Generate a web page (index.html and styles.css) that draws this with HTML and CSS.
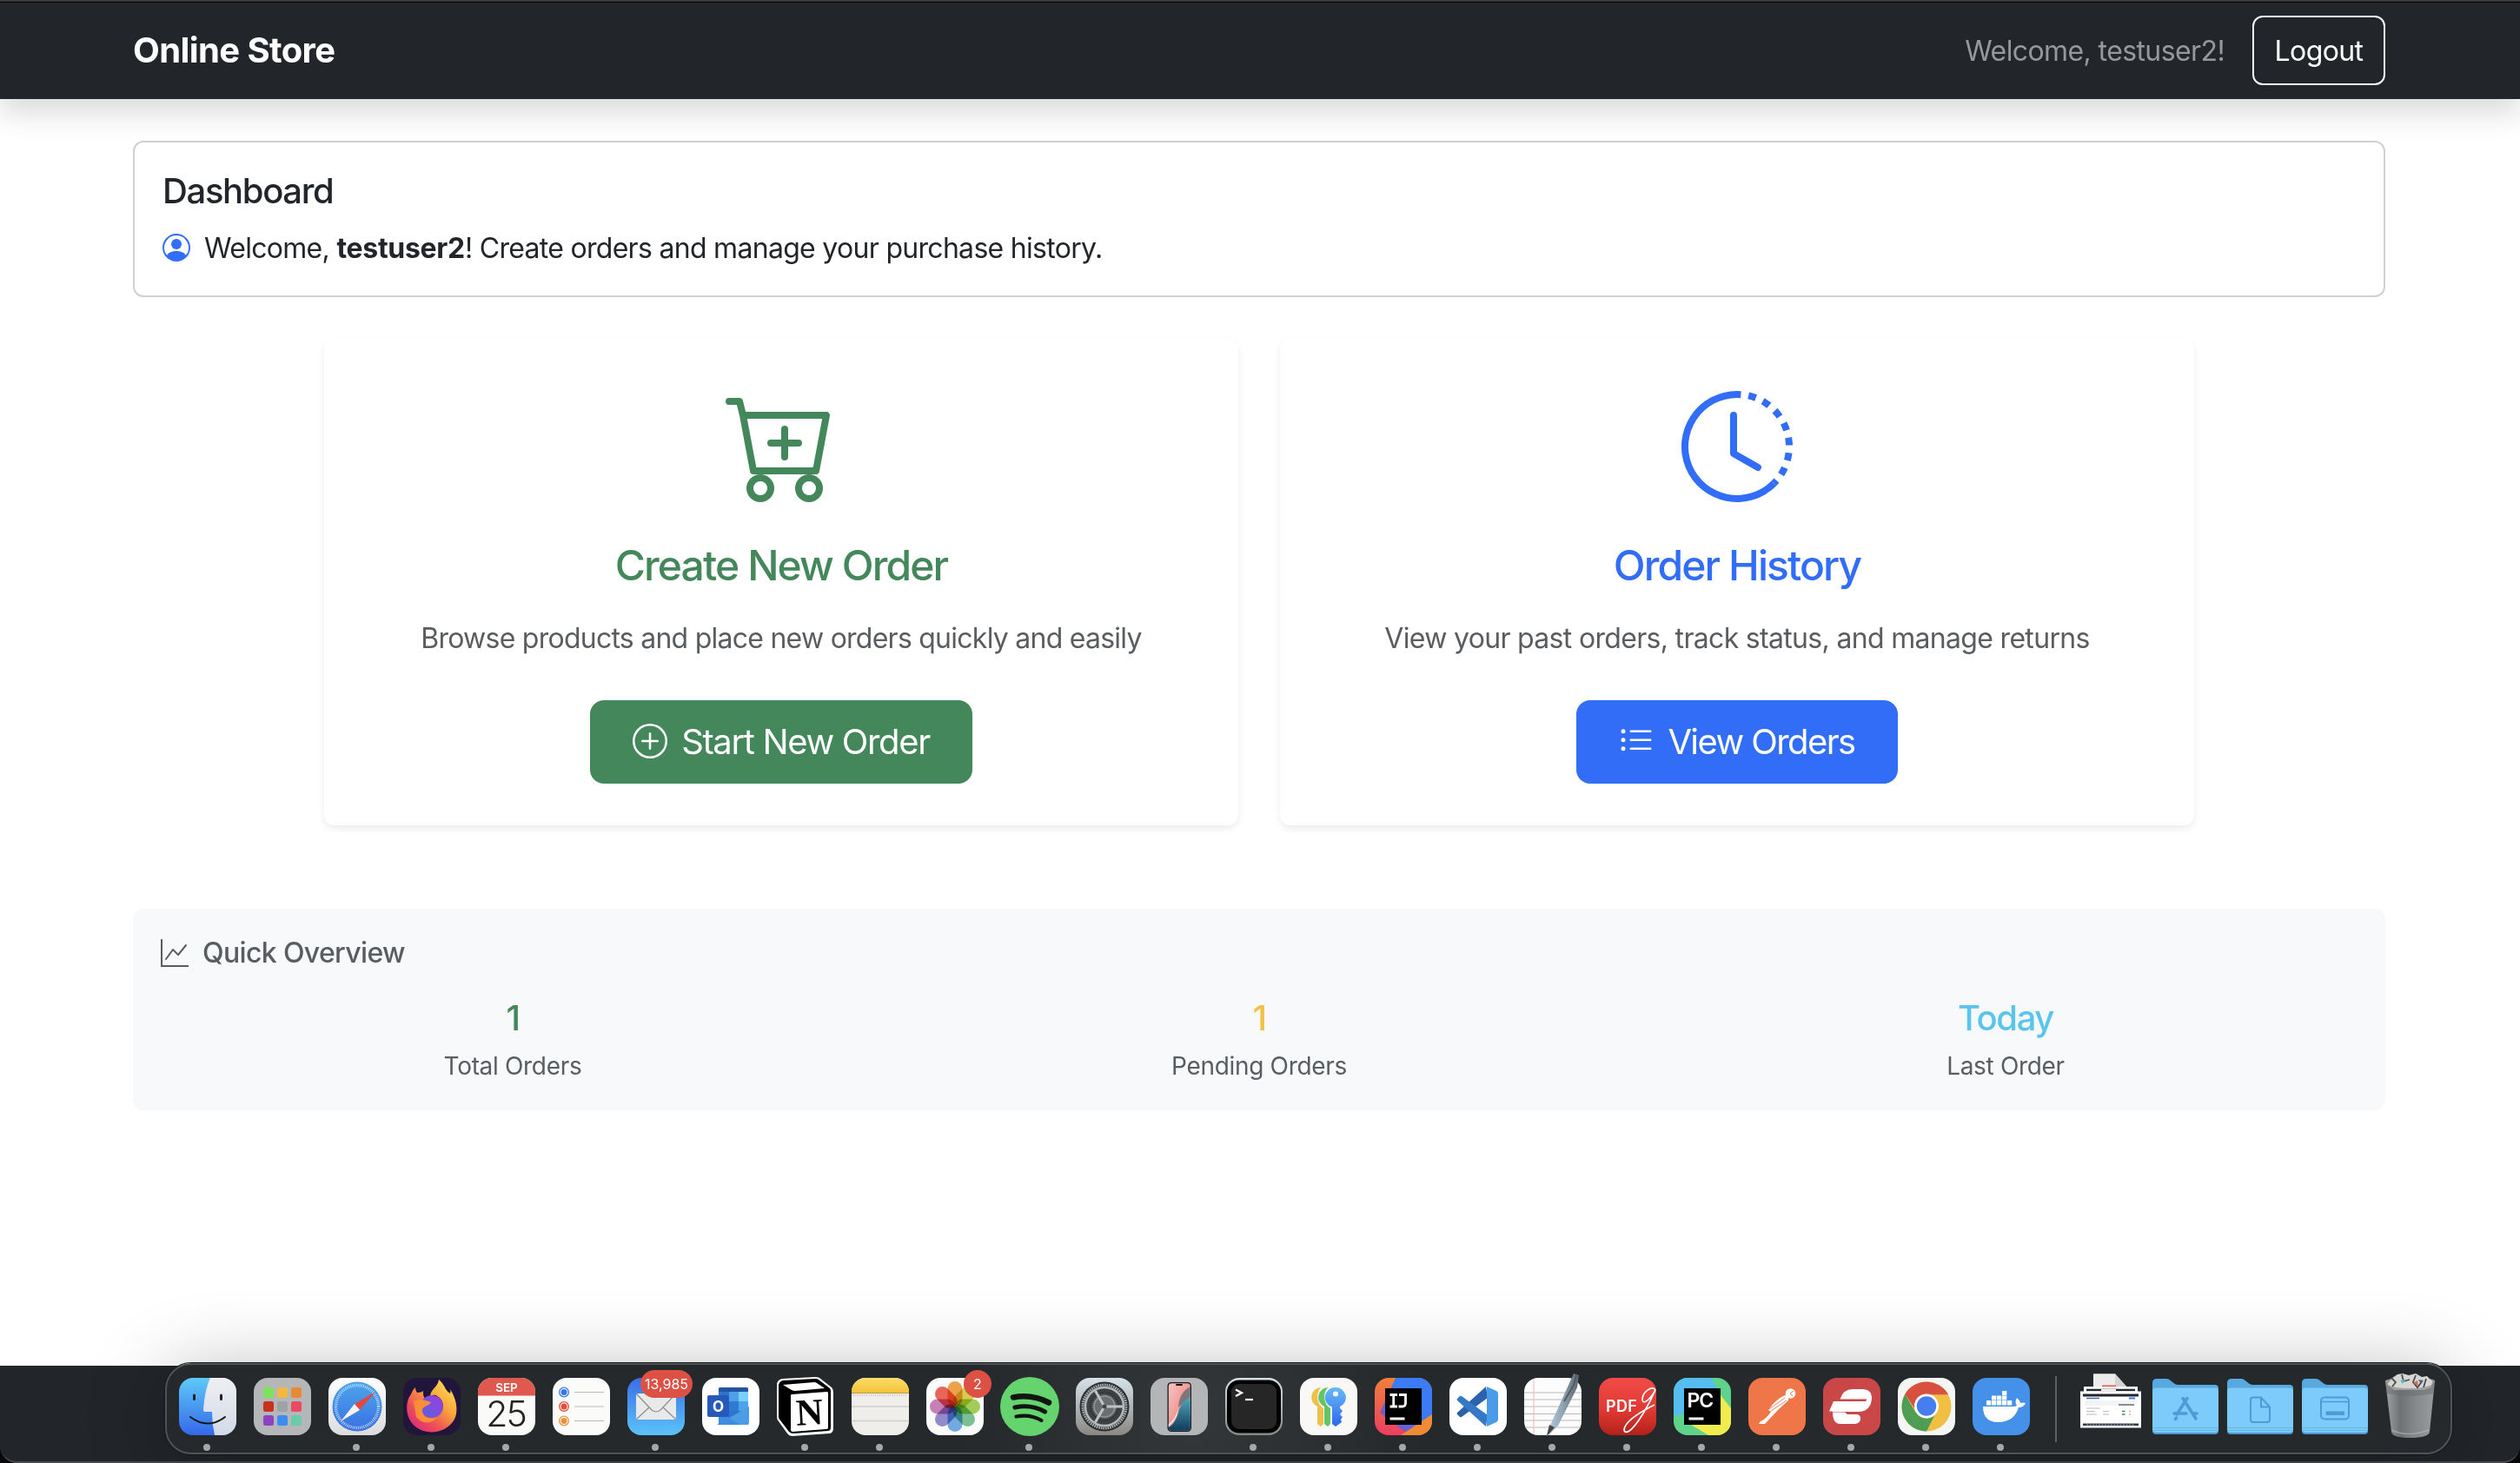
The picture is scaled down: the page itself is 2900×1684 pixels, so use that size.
FILE: index.html
```html
<!DOCTYPE html>
<html lang="en">
<head>
<meta charset="utf-8">
<title>Online Store</title>
<link rel="stylesheet" href="styles.css">
</head>
<body>
<header class="navbar">
  <div class="container navbar-inner">
    <a class="brand">Online Store</a>
    <div class="navbar-user">
      <span class="navbar-text">Welcome, testuser2!</span>
      <button class="btn-logout">Logout</button>
    </div>
  </div>
</header>

<main class="container main">
  <section class="card-intro">
    <h1 class="intro-title">Dashboard</h1>
    <p class="intro-text">
      <svg class="icon-user" viewBox="0 0 16 16" fill="currentColor"><path d="M11 6a3 3 0 1 1-6 0 3 3 0 0 1 6 0"/><path fill-rule="evenodd" d="M0 8a8 8 0 1 1 16 0A8 8 0 0 1 0 8m8-7a7 7 0 0 0-5.468 11.37C3.242 11.226 4.805 10 8 10s4.757 1.225 5.468 2.37A7 7 0 0 0 8 1"/></svg>
      <span>Welcome, <strong>testuser2</strong>! Create orders and manage your purchase history.</span>
    </p>
  </section>

  <section class="actions">
    <article class="action-card green">
      <svg class="action-icon" viewBox="0 0 16 16" fill="currentColor"><path d="M9 5.5a.5.5 0 0 0-1 0V7H6.500a.5.5 0 0 0 0 1H8v1.500a.5.5 0 0 0 1 0V8h1.500a.5.5 0 0 0 0-1H9z"/><path d="M.5 1a.5.5 0 0 0 0 1h1.110l.401 1.607 1.498 7.985A.5.5 0 0 0 4 12h1a2 2 0 1 0 0 4 2 2 0 0 0 0-4h7a2 2 0 1 0 0 4 2 2 0 0 0 0-4h1a.5.5 0 0 0 .491-.408l1.500-8A.5.5 0 0 0 14.500 3H2.890l-.405-1.621A.5.5 0 0 0 2 1zm3.915 10L3.102 4h10.796l-1.313 7zM6 14a1 1 0 1 1-2 0 1 1 0 0 1 2 0m7 0a1 1 0 1 1-2 0 1 1 0 0 1 2 0"/></svg>
      <h2 class="action-title">Create New Order</h2>
      <p class="action-text">Browse products and place new orders quickly and easily</p>
      <a class="btn">
        <svg class="btn-icon" viewBox="0 0 16 16" fill="currentColor"><path d="M8 15A7 7 0 1 1 8 1a7 7 0 0 1 0 14m0 1A8 8 0 1 0 8 0a8 8 0 0 0 0 16"/><path d="M8 4a.5.5 0 0 1 .5.5v3h3a.5.5 0 0 1 0 1h-3v3a.5.5 0 0 1-1 0v-3h-3a.5.5 0 0 1 0-1h3v-3A.5.5 0 0 1 8 4"/></svg>
        <span>Start New Order</span>
      </a>
    </article>
    <article class="action-card blue">
      <svg class="action-icon" viewBox="0 0 16 16" fill="currentColor"><path d="M8.515 1.019A7 7 0 0 0 8 1V0a8 8 0 0 1 .589.022zm2.004.450a7 7 0 0 0-.985-.299l.219-.976q.576.129 1.126.342zm1.370.710a7 7 0 0 0-.439-.270l.493-.870a8 8 0 0 1 .979.654l-.615.789a7 7 0 0 0-.418-.302zm1.834 1.790a7 7 0 0 0-.653-.796l.724-.690q.406.429.747.910zm.744 1.352a7 7 0 0 0-.214-.468l.893-.450a8 8 0 0 1 .450 1.088l-.950.313a7 7 0 0 0-.179-.483m.530 2.507a7 7 0 0 0-.100-1.025l.985-.170q.100.580.116 1.170zm-.131 1.538q.050-.254.081-.510l.993.123a8 8 0 0 1-.230 1.155l-.964-.267q.069-.247.120-.501m-.952 2.379q.276-.436.486-.908l.914.405q-.240.540-.555 1.038zm-.964 1.205q.183-.183.350-.378l.758.653a8 8 0 0 1-.401.432z"/><path d="M8 1a7 7 0 1 0 4.950 11.950l.707.707A8.001 8.001 0 1 1 8 0z"/><path d="M7.500 3a.5.5 0 0 1 .5.5v5.210l3.248 1.856a.5.5 0 0 1-.496.868l-3.500-2A.5.5 0 0 1 7 9V3.500a.5.5 0 0 1 .5-.5"/></svg>
      <h2 class="action-title">Order History</h2>
      <p class="action-text wide">View your past orders, track status, and manage returns</p>
      <a class="btn btn-view">
        <svg class="btn-icon" viewBox="0 0 16 16" fill="currentColor"><path fill-rule="evenodd" d="M5 11.500a.5.5 0 0 1 .5-.5h9a.5.5 0 0 1 0 1h-9a.5.5 0 0 1-.5-.5m0-4a.5.5 0 0 1 .5-.5h9a.5.5 0 0 1 0 1h-9a.5.5 0 0 1-.5-.5m0-4a.5.5 0 0 1 .5-.5h9a.5.5 0 0 1 0 1h-9a.5.5 0 0 1-.5-.5m-3 1a1 1 0 1 0 0-2 1 1 0 0 0 0 2m0 4a1 1 0 1 0 0-2 1 1 0 0 0 0 2m0 4a1 1 0 1 0 0-2 1 1 0 0 0 0 2"/></svg>
        <span>View Orders</span>
      </a>
    </article>
  </section>

  <section class="overview">
    <h3 class="overview-title">
      <svg class="icon-graph" viewBox="0 0 16 16" fill="currentColor"><path fill-rule="evenodd" d="M0 0h1v15h15v1H0zm14.817 3.113a.5.5 0 0 1 .070.704l-4.500 5.500a.5.5 0 0 1-.740.037L7.060 6.767l-3.656 5.027a.5.5 0 0 1-.808-.588l4-5.500a.5.5 0 0 1 .758-.060l2.609 2.610 4.150-5.073a.5.5 0 0 1 .704-.070"/></svg>
      <span>Quick Overview</span>
    </h3>
    <div class="stats">
      <div class="stat"><strong class="stat-value success">1</strong><span class="stat-label">Total Orders</span></div>
      <div class="stat"><strong class="stat-value warning">1</strong><span class="stat-label">Pending Orders</span></div>
      <div class="stat"><strong class="stat-value info">Today</strong><span class="stat-label">Last Order</span></div>
    </div>
  </section>
</main>

<footer class="footer"></footer>

<div class="dock">
  <svg width="0" height="0" class="defs">
    <defs>
      <linearGradient id="gFinder" x2="0" y2="1"><stop offset="0" stop-color="#5fc9f8"/><stop offset="1" stop-color="#3468ea"/></linearGradient>
      <linearGradient id="gFace" x2="0" y2="1"><stop offset="0" stop-color="#efeff1"/><stop offset="1" stop-color="#d2dae8"/></linearGradient>
      <linearGradient id="gPaper" x2="0" y2="1"><stop offset="0" stop-color="#fff"/><stop offset="1" stop-color="#dcdcdc"/></linearGradient>
      <linearGradient id="gSafari" x2="0" y2="1"><stop offset="0" stop-color="#4ba6ec"/><stop offset="1" stop-color="#3b70e2"/></linearGradient>
      <linearGradient id="gFox" x1="1" x2="0.2" y2="1"><stop offset="0" stop-color="#fff05a"/><stop offset=".45" stop-color="#f9a13c"/><stop offset=".75" stop-color="#ef4d57"/><stop offset="1" stop-color="#d82c7e"/></linearGradient>
      <linearGradient id="gOrb" x1="1" x2="0" y2="1"><stop offset="0" stop-color="#a13ae0"/><stop offset="1" stop-color="#5565dc"/></linearGradient>
      <linearGradient id="gMail" x2="0" y2="1"><stop offset="0" stop-color="#3a6ee8"/><stop offset="1" stop-color="#5cc3f8"/></linearGradient>
      <linearGradient id="gNote" x2="0" y2="1"><stop offset="0" stop-color="#fadb6b"/><stop offset="1" stop-color="#f5c338"/></linearGradient>
      <linearGradient id="gGear" x2="0" y2="1"><stop offset="0" stop-color="#d5e2ea"/><stop offset="1" stop-color="#8b8883"/></linearGradient>
      <linearGradient id="gPhone" x2="1" y2="1"><stop offset="0" stop-color="#f9c5c0"/><stop offset=".5" stop-color="#f09a96"/><stop offset="1" stop-color="#f6c6a4"/></linearGradient>
      <linearGradient id="gSea" x2="0" y2="1"><stop offset="0" stop-color="#4fa9bd"/><stop offset="1" stop-color="#123b5c"/></linearGradient>
      <linearGradient id="gKey" x2="0" y2="1"><stop offset="0" stop-color="#65bbf5"/><stop offset="1" stop-color="#2f66f2"/></linearGradient>
      <linearGradient id="gPdf" x2="0" y2="1"><stop offset="0" stop-color="#f14c49"/><stop offset=".55" stop-color="#e13a33"/><stop offset="1" stop-color="#b3211a"/></linearGradient>
      <linearGradient id="gIj" x2="0" y2="1"><stop offset="0" stop-color="#f0803a"/><stop offset="1" stop-color="#ec3f62"/></linearGradient>
      <linearGradient id="gIj2" x1="1" x2="0" y2="1"><stop offset="0.4" stop-color="#3b7bf6"/><stop offset="1" stop-color="#9b45a5"/></linearGradient>
      <linearGradient id="gTrash"><stop offset="0" stop-color="#a0a2a4"/><stop offset=".3" stop-color="#6f7274"/><stop offset=".6" stop-color="#85888a"/><stop offset="1" stop-color="#9a9c9e"/></linearGradient>
      <linearGradient id="gPen"><stop offset="0" stop-color="#b8d0e6"/><stop offset=".5" stop-color="#8fa3b3"/><stop offset="1" stop-color="#5a636b"/></linearGradient>
      <clipPath id="tile"><rect width="66" height="66" rx="16"/></clipPath>
      <g id="folder"><path d="M-5 6q0-5 5-5H11c5 0 8 7 14 7H67q4 0 4 4V60H-5z" fill="#57a9df"/><rect x="-5" y="12" width="76" height="53" rx="4" fill="#4a98cf"/><rect x="-5" y="11.500" width="76" height="51.500" rx="4" fill="#7ccbfa"/><path d="M-5 57.500H71M-5 60.500H71" stroke="#68b6e6" stroke-width="1.200"/></g>
    </defs>
  </svg>

  <svg class="app" viewBox="-10 -15 86 101"><g clip-path="url(#tile)"><rect width="66" height="66" fill="url(#gFinder)"/><path d="M36 0C31 11 29 24 28 37q0 2 2 2h8q0 14 3 27H66V0z" fill="url(#gFace)"/></g><path d="M17.500 20v4.500M48.500 20v4.500" stroke="#222" stroke-width="3" stroke-linecap="round"/><path d="M13 45q20 15 40 0" fill="none" stroke="#17181c" stroke-width="2" stroke-linecap="round"/><circle class="dot" cx="32" cy="80" r="4"/></svg>

  <svg class="app" viewBox="-10 -15 86 101"><rect width="66" height="66" rx="16" fill="#b4b6b8"/><g><rect x="11" y="11" width="12" height="12" rx="2.500" fill="#7de35a"/><rect x="27" y="11" width="12" height="12" rx="2.500" fill="#f3b840"/><rect x="43" y="11" width="12" height="12" rx="2.500" fill="#e68a36"/><rect x="11" y="27" width="12" height="12" rx="2.500" fill="#c8301f"/><rect x="27" y="27" width="12" height="12" rx="2.500" fill="#9da4a8"/><rect x="43" y="27" width="12" height="12" rx="2.500" fill="#ea4b62"/><rect x="11" y="43" width="12" height="12" rx="2.500" fill="#8d42c4"/><rect x="27" y="43" width="12" height="12" rx="2.500" fill="#3d8cf2"/><rect x="43" y="43" width="12" height="12" rx="2.500" fill="#69cbaa"/></g></svg>

  <svg class="app" viewBox="-10 -15 86 101"><rect width="66" height="66" rx="16" fill="url(#gPaper)"/><circle cx="33" cy="33" r="28.500" fill="url(#gSafari)"/><circle cx="33" cy="33" r="24.500" fill="none" stroke="#d5e6fa" stroke-width="3.500" stroke-dasharray=".8 1.338"/><path d="M54 16 30 30l6 7z" fill="#e0493c"/><path d="M14 50 30 30l6 7z" fill="#f4f4f4"/><circle class="dot" cx="32" cy="80" r="4"/></svg>

  <svg class="app" viewBox="-10 -15 86 101"><rect width="66" height="66" rx="16" fill="#21153b"/><path d="M41 2c8 7 6 11 13 16 1-3 0-4 0-5 9 14 10 30 2 39-13 15-36 13-46 0C2 42 3 26 9 19c1-3 2-5 5-8 0 3 1 5 2 6 3 0 6-1 7-2 0 4 0 6 2 9h7c-2 4-6 5-9 7-2 10 7 17 16 12 10-6 8-18 0-22-3-2-4-1-8 0 1-9 9-10 10-19z" fill="url(#gFox)"/><circle cx="33" cy="33" r="13" fill="url(#gOrb)"/><path d="M12 27c6-3 13-2 20 1-2 4-8 4-10 8-1 9 8 13 17 9-5 8-17 9-24 0z" fill="#fb8f38"/><circle class="dot" cx="32" cy="80" r="4"/></svg>

  <svg class="app" viewBox="-10 -15 86 101"><g clip-path="url(#tile)"><rect width="66" height="66" fill="#fafaf8"/><rect width="66" height="20.500" fill="#e0594f"/></g><text x="33" y="16" class="t-sep">SEP</text><text x="32" y="56" class="t-day">25</text><circle class="dot" cx="32" cy="80" r="4"/></svg>

  <svg class="app" viewBox="-10 -15 86 101"><rect width="66" height="66" rx="16" fill="#fbfbfa"/><g stroke-width="1.300" fill="none"><circle cx="13" cy="16.500" r="5.300" stroke="#3478f0"/><circle cx="13" cy="33" r="5.300" stroke="#e24b3a"/><circle cx="13" cy="49.500" r="5.300" stroke="#e8933a"/></g><circle cx="13" cy="16.500" r="3.500" fill="#3478f0"/><circle cx="13" cy="33" r="3.500" fill="#e24b3a"/><circle cx="13" cy="49.500" r="3.500" fill="#e8933a"/><path d="M25 16.500h34M25 33h34M25 49.500h34" stroke="#b9b9bc" stroke-width="1.200"/></svg>

  <svg class="app" viewBox="-10 -15 86 101"><rect width="66" height="66" rx="16" fill="url(#gMail)"/><rect x="10" y="18" width="46" height="30" rx="3" fill="#e9e9e9"/><path d="M11 19l17 18q5 4 10 0l17-18M11 47l14-13M55 47 41 34" fill="none" stroke="#8d8d8d" stroke-width="1.200"/><rect x="15" y="-9" width="60" height="32" rx="16" fill="#dd5044"/><text x="45" y="13" class="t-badge">13,985</text><circle class="dot" cx="32" cy="80" r="4"/></svg>

  <svg class="app" viewBox="-10 -15 86 101"><rect width="66" height="66" rx="16" fill="#fff"/><rect x="19" y="11" width="34" height="43" rx="2" fill="#2f74cc"/><path d="M19 16V13q0-2 2-2H51q2 0 2 2v3z" fill="#2353a3"/><path d="M31 16h11v11H31z" fill="#4f9fe8"/><path d="M42 16h11v11H42z" fill="#79d0fb"/><path d="M42 27h11v11H42z" fill="#4ca5ec"/><path d="M31 27h11v11H31z" fill="#2f7ad2"/><path d="M17 54 54 33V52q0 2-2 2z" fill="#4c9ce6"/><path d="M19 38 44 54H19z" fill="#3e8edf"/><rect x="6" y="20" width="25" height="25" rx="2" fill="#2659b9"/><text x="18.500" y="39" class="t-outlook">O</text></svg>

  <svg class="app" viewBox="-10 -15 86 101"><path d="M6 1 44-1q3 0 5 1L63 11q2 2 2 5V58q0 5-4 6L18 67q-4 0-6-3L2 50Q0 48 0 45V7Q1 2 6 1z" fill="#fff"/><path d="M7 3 44 1q3 0 4 1L61 12q1 1 1 4V57q0 4-3 4L19 64q-3 0-5-2L4 49Q2 47 2 45V8Q3 4 7 3z" fill="#000"/><path d="M7 8 43 5q2 0 3 1l9 6-34 3q-2 0-4-1z" fill="#fff"/><path d="M17 19 58 16q1 0 1 2V57q0 2-2 2L18 62q-2 0-2-2V21q0-2 1-2z" fill="#fff"/><text x="37.500" y="54" class="t-notion" transform="rotate(-3 37 40)">N</text><circle class="dot" cx="32" cy="80" r="4"/></svg>

  <svg class="app" viewBox="-10 -15 86 101"><g clip-path="url(#tile)"><rect width="66" height="66" fill="#efeeeb"/><rect width="66" height="17" fill="url(#gNote)"/><path d="M0 17.500h66" stroke="#b99b46"/><path d="M2 20h62" stroke="#bbb" stroke-width="1.500" stroke-dasharray="1 1.500"/><path d="M0 33h66M0 49.500h66" stroke="#cfcecb" stroke-width="1.500"/></g><circle class="dot" cx="32" cy="80" r="4"/></svg>

  <svg class="app" viewBox="-10 -15 86 101"><rect width="66" height="66" rx="16" fill="#fbfbfb"/><g class="petals"><rect x="24.500" y="4" width="17" height="29" rx="8.500" fill="#f09a38"/><rect x="24.500" y="4" width="17" height="29" rx="8.500" fill="#d3cf3c" transform="rotate(45 33 33)"/><rect x="24.500" y="4" width="17" height="29" rx="8.500" fill="#9ccb46" transform="rotate(90 33 33)"/><rect x="24.500" y="4" width="17" height="29" rx="8.500" fill="#6fbd8c" transform="rotate(135 33 33)"/><rect x="24.500" y="4" width="17" height="29" rx="8.500" fill="#63a4e2" transform="rotate(180 33 33)"/><rect x="24.500" y="4" width="17" height="29" rx="8.500" fill="#8a80c8" transform="rotate(225 33 33)"/><rect x="24.500" y="4" width="17" height="29" rx="8.500" fill="#c573b4" transform="rotate(270 33 33)"/><rect x="24.500" y="4" width="17" height="29" rx="8.500" fill="#ea5548" transform="rotate(315 33 33)"/></g><circle cx="59" cy="7" r="16" fill="#dd5044"/><text x="59" y="13" class="t-badge">2</text></svg>

  <svg class="app" viewBox="-10 -15 86 101"><circle cx="33" cy="33" r="34" fill="#65d36e"/><g fill="none" stroke="#101510" stroke-linecap="round"><path d="M14 22.500q22-4 41 6" stroke-width="6.500"/><path d="M16 34q19-4 34.500 5" stroke-width="5.200"/><path d="M17.500 44.500q16-3 29 4.500" stroke-width="4.200"/></g><circle class="dot" cx="32" cy="80" r="4"/></svg>

  <svg class="app" viewBox="-10 -15 86 101"><rect width="66" height="66" rx="16" fill="url(#gGear)"/><circle cx="33" cy="33" r="28.500" fill="#2b2d2e"/><circle cx="33" cy="33" r="25" fill="#444748" stroke="#a9adaf" stroke-width="3" stroke-dasharray="1.600 1"/><circle cx="33" cy="33" r="22" fill="#3e4142" stroke="#b4b8ba" stroke-width="2.500"/><circle cx="33" cy="33" r="15.500" fill="#5c5f60" stroke="#2f3132" stroke-width="3" stroke-dasharray="1.500 1"/><circle cx="33" cy="33" r="12" fill="#6b6d6e" stroke="#939697" stroke-width="1.500"/><path d="M33 33H54M33 33 22.500 15M33 33 22.500 51" stroke="#bfc3c5" stroke-width="3"/><circle cx="33" cy="33" r="2.500" fill="#444"/></svg>

  <svg class="app" viewBox="-10 -15 86 101"><rect width="66" height="66" rx="16" fill="#b4b5b7"/><rect x="19.500" y="5" width="27.500" height="57" rx="4.500" fill="#17191c"/><rect x="20.800" y="6.200" width="25" height="54.500" rx="3.500" fill="url(#gPhone)"/><path d="M46 10C36 16 33 22 32 34L46 22z" fill="#7d767e"/><path d="M45.800 22C36 28 33 35 32 40c-2 8-6 14-11.200 17q0 3.700 3.500 3.700h18q3.500 0 3.500-3.500z" fill="url(#gSea)"/><path d="M32 34c-2 10-6 15-11.200 19v3C27 50 32 44 32 34z" fill="#f1e6e4"/><rect x="29" y="7" width="8" height="2" rx="1" fill="#111"/></svg>

  <svg class="app" viewBox="-10 -15 86 101"><rect width="66" height="66" rx="16" fill="url(#gGear)"/><rect x="2" y="2.500" width="62" height="61" rx="14" fill="#000"/><rect x="7" y="7" width="52" height="52" rx="9" fill="#262626"/><path d="M12 13.500 19 17.200 12 21" fill="none" stroke="#fff" stroke-width="2.200"/><path d="M23 25h9" stroke="#fff" stroke-width="2.200"/><circle class="dot" cx="32" cy="80" r="4"/></svg>

  <svg class="app" viewBox="-10 -15 86 101"><rect width="66" height="66" rx="16" fill="#f9f8f7"/><path d="M24 11a11.500 11.500 0 0 0-4 22V53l4 3 3-3V35C19 30 18 18 24 11z" fill="#edc04a"/><path d="M32 11a11.500 11.500 0 0 0-4 22V53l4 3 3-3V35C27 30 26 18 32 11z" fill="#65c466"/><path fill-rule="evenodd" d="M41 11a11.500 11.500 0 0 1 5 22v2l3 3-3 4 3 3-2 3 1 3-7 5-4-3V33.500A11.500 11.500 0 0 1 41 11zm0 4.500a3 3 0 1 0 0 6 3 3 0 0 0 0-6" fill="url(#gKey)"/><circle class="dot" cx="32" cy="80" r="4"/></svg>

  <svg class="app" viewBox="-10 -15 86 101"><g clip-path="url(#tile)"><rect width="66" height="66" fill="url(#gIj)"/><path d="M24 0H66V46L40 66 6 40z" fill="url(#gIj2)"/><path d="M66 42V66H30z" fill="#f08a35"/></g><rect x="12" y="12" width="42" height="42" fill="#000"/><path d="M17.500 19.500h8.500M21.700 19.500v13.500M17.500 33h8.500M28 19.500h7.500V29q0 4-4 4h-4" fill="none" stroke="#fff" stroke-width="2.800"/><rect x="17.500" y="45.500" width="17" height="3" fill="#fff"/><circle class="dot" cx="32" cy="80" r="4"/></svg>

  <svg class="app" viewBox="-10 -15 86 101"><rect width="66" height="66" rx="16" fill="#fff"/><path d="M42 10 44 23 14 45q-1 .7-2 0l-3-3q-1-1 0-2z" fill="#2a63ab"/><path d="M42 56 44 43 14 21q-1-.7-2 0l-3 3q-1 1 0 2z" fill="#3478c6"/><path d="M43 10 54 15q2 1 2 3V48q0 2-2 3L43 56z" fill="#4a9bea"/><circle class="dot" cx="32" cy="80" r="4"/></svg>

  <svg class="app" viewBox="-10 -15 86 101"><rect width="66" height="66" rx="16" fill="#fcfcfc"/><path d="M0 17h66M0 25h66M0 33h66M0 41.500h66M0 49h66M1 57h64" stroke="#b9b9b9" stroke-width="1.200"/><path d="M11 1v64" stroke="#f0b9b5"/><path d="M57-5l6 2-2 14-22 44-10 10-3 2 1-6 6-13z" fill="url(#gPen)"/><path d="M60-3 57 8 46 27" fill="none" stroke="#4b545d" stroke-width="1.500"/><path d="M29 54l6 3-6 7-3 3z" fill="#454545"/><circle class="dot" cx="32" cy="80" r="4"/></svg>

  <svg class="app" viewBox="-10 -15 86 101"><rect width="66" height="66" rx="16" fill="url(#gPdf)"/><text x="8" y="39" class="t-pdf">PDF</text><path d="M65 14C62 8 50 16 50 25c0 6 8 2 15-11C58 30 44 55 35 61c-6 4-8-1-3-8 7-9 20-16 32-22" fill="none" stroke="#fff" stroke-width="1.700"/><circle class="dot" cx="32" cy="80" r="4"/></svg>

  <svg class="app" viewBox="-10 -15 86 101"><g clip-path="url(#tile)"><rect width="66" height="66" fill="#5fd38b"/><path d="M0 0H43L50 12 20 40 0 44z" fill="#55bdf0"/><path d="M54 20 66 35V66H40L20 54z" fill="#f0ec4e"/></g><rect x="12" y="12" width="42" height="42" fill="#000"/><text x="15.500" y="33.500" class="t-pc">PC</text><rect x="17.500" y="45.500" width="17" height="3" fill="#fff"/><circle class="dot" cx="32" cy="80" r="4"/></svg>

  <svg class="app" viewBox="-10 -15 86 101"><rect width="66" height="66" rx="16" fill="#ee7648"/><circle cx="48.500" cy="18" r="5.800" fill="#fff"/><path d="M48 18l4-3M48 18l3 3" stroke="#ee7648"/><path d="M42 20q5 1 4 6L34 37 20 52l-1 1H12l2-3q6-2 12-11l-3-2q8-12 19-17z" fill="#fff"/><path d="M24 36 42 23M26 38 44 26" stroke="#ee7648" stroke-width=".9"/><circle class="dot" cx="32" cy="80" r="4"/></svg>

  <svg class="app" viewBox="-10 -15 86 101"><rect width="66" height="66" rx="16" fill="#c94746"/><path d="M34 13H45q11 0 11 10.500Q55 38 42 39H11L9.500 38.500H7L12 27H49l1.500-2.500H19.500Q23 13 34 13z" fill="#fff"/><path d="M11 39.500Q11 53 20 53H37q6-1 6-6 0-5-5-5H28l-3-2.500z" fill="#fff"/><circle class="dot" cx="32" cy="80" r="4"/></svg>

  <svg class="app" viewBox="-10 -15 86 101"><rect width="66" height="66" rx="16" fill="#f5f5f4"/><circle cx="33" cy="33" r="28.500" fill="#f1bf42"/><path d="M8.300 18.800A28.500 28.500 0 0 1 57.700 18.800H33L22 39z" fill="#d85140"/><path d="M8.300 18.800 20.700 40 33 47 43 42 33 61.500A28.500 28.500 0 0 1 8.300 18.800z" fill="#4f9e55"/><path d="M33 18.800H57.700" stroke="#d85140" stroke-width="1"/><circle cx="33" cy="32.500" r="14" fill="#fff"/><circle cx="33" cy="32.500" r="11.200" fill="#467df0"/><circle class="dot" cx="32" cy="80" r="4"/></svg>

  <svg class="app" viewBox="-10 -15 86 101"><rect width="66" height="66" rx="16" fill="#4590e8"/><path d="M12 33H47q2 0 4-1-3-4 0-9 3 2 4 6 3-1 6 0-2 5-8 5Q48 51 29 51 12 51 12 33z" fill="#fff"/><g fill="#fff"><path d="M16 26h5.300v5.500H16zM22 26h5.300v5.500H22zM28 26h5.300v5.500H28zM34 26h5.300v5.500H34zM40 26h5.300v5.500H40zM22 20.500h5.300v5H22zM28 20.500h5.300v5H28zM34 20.500h5.300v5H34zM34 15h5.300v5H34z"/></g><circle class="dot" cx="32" cy="80" r="4"/></svg>

  <div class="dock-sep"></div>

  <svg class="app" viewBox="-10 -15 86 101"><path d="M13-4.700H38L52 11H13z" fill="#ececec"/><path d="M38-4.700 52 11H38z" fill="#d2d2d2"/><rect x="2" y="10" width="62" height="8" fill="#fff"/><rect x="23" y="8.500" width="16" height="1.500" fill="#e2594a"/><path d="M5 14h56" stroke="#25282c" stroke-width="2.500"/><path d="M22 14h17" stroke="#eee" stroke-width="2"/><rect x="-2" y="15.500" width="70" height="42" fill="#fff"/><rect x="1" y="18.500" width="64" height="3" fill="#22262a"/><path d="M5 23.500h15" stroke="#4668a8" stroke-width="1.500"/><rect x="54" y="22.500" width="7" height="2" fill="#3a76f0"/><rect x="3" y="26" width="60" height="6" fill="#f3f4f6"/><rect x="42" y="30" width="18" height="2" fill="#8b8d90"/><path d="M5 35h16M5 38.500h10M24 38.500h7M5 42h12M24 42h7" stroke="#bbb" stroke-width="1"/><path d="M46 38.500h3.500M46 42h3.500" stroke="#43875a" stroke-width="1.500"/><path d="M54 38.500h2M54 42h2" stroke="#e8a090" stroke-width="1.500"/><rect x="1" y="52.500" width="64" height="2.500" fill="#33383f"/><path d="M5 53.800h56" stroke="#8795b5" stroke-width="1.200" stroke-dasharray="2 1.500"/></svg>

  <svg class="app" viewBox="-10 -15 86 101"><use href="#folder"/><g stroke="#4f9ad6" stroke-width="3.500" stroke-linecap="round" fill="none"><path d="M30 23.500 45 47M35 23.500 23 42M20 41h14M42 41h4M22.500 46 21.500 47.500"/></g></svg>
  <svg class="app" viewBox="-10 -15 86 101"><use href="#folder"/><path d="M25 22.500h9l10 11V48q0 3-3 3H25q-3 0-3-3V25.500q0-3 3-3zM34 22.500V33.500H44" fill="none" stroke="#4f9ad6" stroke-width="2"/></svg>
  <svg class="app" viewBox="-10 -15 86 101"><use href="#folder"/><rect x="17" y="22.500" width="32" height="25" rx="4" fill="none" stroke="#4f9ad6" stroke-width="2"/><path d="M17 27.500h32" stroke="#4f9ad6" stroke-width="1.500"/><rect x="22.500" y="38.500" width="21.500" height="4.500" rx="1" fill="#4f9ad6"/></svg>

  <svg class="app" viewBox="-10 -15 86 101"><path d="M5 3q28-10 57 0L56 62q-1 7-23 7-20 0-21-7z" fill="url(#gTrash)"/><path d="M7 8 13 0l6-4 6-1 7 2 8-2 7 4 6-1 6 6-1 7-9 3H15z" fill="#d6d6d4"/><path d="M12 0l5 5-4 5M24-4l2 8 7-2M40-3l-3 8 5 6 6-8M52 1l-3 10" fill="none" stroke="#4f4c49" stroke-width="1.800"/><path d="M22 3l6-1-3 5z" fill="#4fc0cf"/><path d="M37 6l5-3 1 6z" fill="#d96e3a"/><path d="M43 2l3 5 2-4z" fill="#3c5fa8"/><path d="M4.500 4Q8 12 33 12 58 12 62 4L60 18Q34 24 7 18z" fill="#6a6c6e" opacity=".5"/><path d="M12 60q20 9 43 0" fill="none" stroke="#b5b7b9" stroke-width="1.500" opacity=".6"/></svg>
</div>
</body>
</html>
```
FILE: styles.css
```css
* { box-sizing: border-box; }

body {
  margin: 0;
  height: 1684px;
  display: flex;
  flex-direction: column;
  position: relative;
  overflow: hidden;
  background: linear-gradient(#fff 1620px, #08090a 1620px);
  color: #22262a;
  font-family: Inter, "Liberation Sans", sans-serif;
  font-size: 32px;
  line-height: 48px;
}

h1, h2, h3, p { margin: 0; font-weight: 400; }

.container {
  width: 2592px;
  margin-left: 153px;
}

/* Navigation bar */
.navbar {
  height: 114px;
  flex: none;
  border-top: 2px solid #3b3b3b;
  background: linear-gradient(#000 0 1px, #22262a 1px);
  box-shadow: 0 16px 32px rgba(0, 0, 0, .15);
}

.navbar-inner {
  height: 112px;
  display: flex;
  align-items: center;
  justify-content: space-between;
}

.brand {
  color: #fff;
  font-size: 40px;
  font-weight: 700;
  letter-spacing: -.6px;
}

.navbar-user {
  display: flex;
  align-items: center;
  gap: 32px;
}

.navbar-text {
  padding-top: 2px;
  color: #96989a;
  letter-spacing: -.6px;
}

.btn-logout {
  width: 153px;
  height: 80px;
  padding: 2px 0 0;
  border: 2px solid #fff;
  border-radius: 12px;
  background: none;
  color: #fff;
  font: inherit;
  letter-spacing: -.6px;
}

/* Page content */
.main {
  display: flex;
  flex-direction: column;
  padding-top: 48px;
}

.card-intro {
  height: 180px;
  padding: 32px;
  border: 2px solid #d0d0d1;
  border-radius: 12px;
}

.intro-title {
  margin-bottom: 16px;
  font-size: 40px;
  font-weight: 500;
  line-height: 48px;
  letter-spacing: -1.35px;
}

.intro-text {
  display: flex;
  align-items: center;
  gap: 16px;
  letter-spacing: -.7px;
}

.intro-text span { padding-top: 2px; }
.intro-text strong { letter-spacing: -.3px; }

.icon-user {
  width: 32px;
  height: 32px;
  color: #316df6;
}

.actions {
  display: grid;
  grid-template-columns: 1052px 1052px;
  gap: 48px;
  justify-content: center;
  margin-top: 48px;
}

.action-card {
  height: 560px;
  padding-top: 60px;
  display: flex;
  flex-direction: column;
  align-items: center;
  border-radius: 12px;
  background: #fff;
  box-shadow: 0 4px 8px rgba(0, 0, 0, .075);
}

.green { --accent: #43875a; }
.blue { --accent: #316df6; }

.action-icon {
  width: 128px;
  height: 128px;
  color: var(--accent);
}

.action-title {
  margin: 44px 0 31px;
  color: var(--accent);
  font-size: 48px;
  font-weight: 500;
  line-height: 58px;
  letter-spacing: -1.9px;
}

.action-text {
  margin-bottom: 47px;
  color: #5a5d60;
  letter-spacing: -.75px;
}

.action-text.wide { letter-spacing: -.68px; }

.btn {
  width: 440px;
  height: 96px;
  display: flex;
  align-items: center;
  justify-content: center;
  gap: 16px;
  border-radius: 16px;
  background: var(--accent);
  color: #fff;
  font-size: 40px;
  letter-spacing: -1.35px;
}

.btn-view {
  width: 370px;
  letter-spacing: -1.6px;
}

.btn-icon {
  width: 40px;
  height: 40px;
  margin-top: -2px;
}

/* Overview */
.overview {
  height: 232px;
  margin-top: 96px;
  padding: 27px 16px 0;
  border-radius: 12px;
  background: #f8f9fb;
  color: #5a5d60;
}

.overview-title {
  display: flex;
  align-items: center;
  gap: 16px;
  padding-left: 16px;
  font-size: 32px;
  font-weight: 500;
  letter-spacing: -.65px;
}

.icon-graph {
  width: 32px;
  height: 32px;
}

.stats {
  display: grid;
  grid-template-columns: repeat(3, 859px);
  justify-content: center;
  margin-top: 27px;
}

.stat {
  display: flex;
  flex-direction: column;
  align-items: center;
}

.stat-value {
  font-size: 40px;
  font-weight: 500;
  line-height: 48px;
  letter-spacing: -1.4px;
}

.stat-label {
  margin-top: 10px;
  font-size: 28px;
  line-height: 42px;
  letter-spacing: -.32px;
}

.success { color: #43875a; }
.warning { color: #f5c144; }
.info { color: #5ac5ec; }

.footer {
  height: 112px;
  flex: none;
  margin-top: auto;
  border-bottom: 2px solid #4b4b4e;
  border-radius: 0 0 20px 20px;
  background: #22262a;
}

/* Dock, floating over the page */
.dock {
  position: absolute;
  left: 190px;
  top: 1569px;
  width: 2632px;
  height: 105px;
  padding: 0 4px;
  display: flex;
  border: 2px solid #505356;
  border-radius: 30px;
  background: radial-gradient(circle 260px at 1180px 60px, #34373a, #25292c);
  box-shadow: 0 0 0 1px #15181a, 0 10px 90px rgba(0, 0, 0, .28);
}

.defs { position: absolute; }

.app {
  flex: none;
  width: 86px;
  height: 101px;
  overflow: visible;
}

.dock-sep {
  flex: none;
  width: 2px;
  height: 76px;
  margin: 13px 19px 0;
  background: #5d6063;
}

.dot { fill: #a5a7aa; }
.petals rect { mix-blend-mode: multiply; opacity: .9; }

.app text { fill: #fff; text-anchor: middle; }
.app .t-sep { font-size: 13.500px; font-weight: 600; }
.app .t-day { font-size: 41px; font-weight: 300; fill: #222; letter-spacing: -2px; }
.app .t-badge { font-size: 16px; }
.app .t-outlook { font-size: 17px; font-weight: 700; }
.app .t-notion { font-family: "Liberation Serif", serif; font-size: 43px; font-weight: 700; fill: #000; }
.app .t-pdf { font-size: 18px; font-weight: 600; text-anchor: start; letter-spacing: .3px; }
.app .t-pc { font-size: 23px; font-weight: 600; text-anchor: start; letter-spacing: -1px; }
```
